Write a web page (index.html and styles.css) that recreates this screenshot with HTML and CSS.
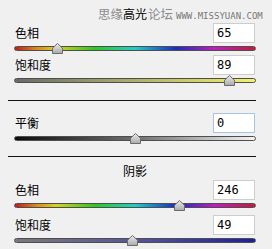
FILE: index.html
```html
<!DOCTYPE html>
<html lang="zh">
<head>
<meta charset="utf-8">
<link rel="stylesheet" href="styles.css">
</head>
<body>
<svg class="defs" width="0" height="0" aria-hidden="true">
  <defs>
    <linearGradient id="tg" x1="0" y1="0" x2="0" y2="1">
      <stop offset="0" stop-color="#ececec"/>
      <stop offset="1" stop-color="#a9a9a9"/>
    </linearGradient>
    <symbol id="thumb" viewBox="0 0 11 11">
      <polygon points="5.5,0.5 10.5,5.2 10.5,10.5 0.5,10.5 0.5,5.2" fill="url(#tg)" stroke="#6b6b6b" stroke-width="1" stroke-linejoin="round"/>
    </symbol>
  </defs>
</svg>
<div class="panel">
  <div class="watermark"><span>思缘</span><span class="wm-b">论坛</span><span class="wm-url">WWW.MISSYUAN.COM</span></div>

  <div class="title">高光</div>

  <div class="group g1">
    <div class="row"><span class="label">色相</span><div class="num">65</div></div>
    <div class="track-area">
      <div class="track hue-a"></div>
      <svg class="thumb" style="--v:18.06%" width="11" height="11"><use href="#thumb"/></svg>
    </div>
  </div>

  <div class="group g2">
    <div class="row"><span class="label">饱和度</span><div class="num">89</div></div>
    <div class="track-area">
      <div class="track sat-a"></div>
      <svg class="thumb" style="--v:89%" width="11" height="11"><use href="#thumb"/></svg>
    </div>
  </div>

  <div class="sep s1"></div>

  <div class="group g3">
    <div class="row"><span class="label">平衡</span><div class="num focus">0</div></div>
    <div class="track-area">
      <div class="track bal"></div>
      <svg class="thumb" style="--v:50%" width="11" height="11"><use href="#thumb"/></svg>
    </div>
  </div>

  <div class="sep s2"></div>

  <div class="title t2">阴影</div>

  <div class="group g4">
    <div class="row"><span class="label">色相</span><div class="num">246</div></div>
    <div class="track-area">
      <div class="track hue-a"></div>
      <svg class="thumb" style="--v:68.33%" width="11" height="11"><use href="#thumb"/></svg>
    </div>
  </div>

  <div class="group g5">
    <div class="row"><span class="label">饱和度</span><div class="num">49</div></div>
    <div class="track-area">
      <div class="track sat-b"></div>
      <svg class="thumb" style="--v:49%" width="11" height="11"><use href="#thumb"/></svg>
    </div>
  </div>
</div>
</body>
</html>
```

FILE: styles.css
```css
html, body {
  margin: 0;
  padding: 0;
}
body {
  background: #f0f0f0;
  width: 272px;
  height: 249px;
  overflow: hidden;
  font-family: "Noto Sans CJK SC", "Noto Sans", sans-serif;
  font-size: 12px;
  color: #000;
}
.defs {
  position: absolute;
  width: 0;
  height: 0;
}
.panel {
  position: relative;
  padding: 6px 16px 0 14px;
}
.watermark {
  position: absolute;
  top: 6px;
  left: 98px;
  display: flex;
  align-items: baseline;
  color: #8c8c8c;
  font-size: 12.5px;
  line-height: 16px;
  white-space: nowrap;
  pointer-events: none;
}
.wm-b {
  margin-left: 25px;
}
.wm-url {
  margin-left: 3px;
  font-family: "DejaVu Sans Mono", monospace;
  font-size: 9px;
  color: #777;
}
.title {
  position: relative;
  height: 16px;
  line-height: 16px;
  text-align: center;
}
.t2 {
  margin-top: 6px;
}
.row {
  display: flex;
  justify-content: space-between;
  align-items: center;
  height: 20px;
}
.label {
  padding-left: 1px;
  line-height: 14px;
}
.num {
  box-sizing: border-box;
  width: 42px;
  height: 20px;
  margin-right: 1px;
  border: 1px solid #cdcdcd;
  background: #fff;
  font-family: "DejaVu Sans Mono", monospace;
  font-size: 12px;
  line-height: 18px;
  padding-left: 3px;
}
.num.focus {
  border-color: #a6c4e4;
}
.track-area {
  position: relative;
  height: 12px;
}
.track {
  position: relative;
  top: 3px;
  height: 3px;
  border: 1px solid #4e4e4e;
  border-radius: 3px;
}
.thumb {
  position: absolute;
  top: 0;
  left: calc(var(--v) - 5.5px);
  display: block;
}
.hue-a {
  background: linear-gradient(to right,
    #c41a1a 0%, #d98a1c 9%, #d8d21e 17%, #2ec81e 33%,
    #1ecfc8 50%, #1a2cc0 67%, #c01cc2 83%, #c41a3a 100%);
}
.sat-a {
  background: linear-gradient(to right, #6a6a6a 0%, #a8a86a 45%, #f2f26a 100%);
}
.bal {
  background: linear-gradient(to right, #0c0c0c 0%, #6e6e6e 50%, #f4f4f4 100%);
}
.sat-b {
  background: linear-gradient(to right, #7a7a7a 0%, #56569a 50%, #1e1e9c 100%);
}
.g1 { margin-top: 1px; }
.g2 { margin-top: 0; }
.g3 { margin-top: 12px; }
.g4 { margin-top: 1px; }
.g5 { margin-top: 3px; }
.sep {
  height: 1px;
  background: #111;
  margin-left: -6px;
}
.s1 { margin-top: 13px; }
.s2 { margin-top: 11px; }
```
